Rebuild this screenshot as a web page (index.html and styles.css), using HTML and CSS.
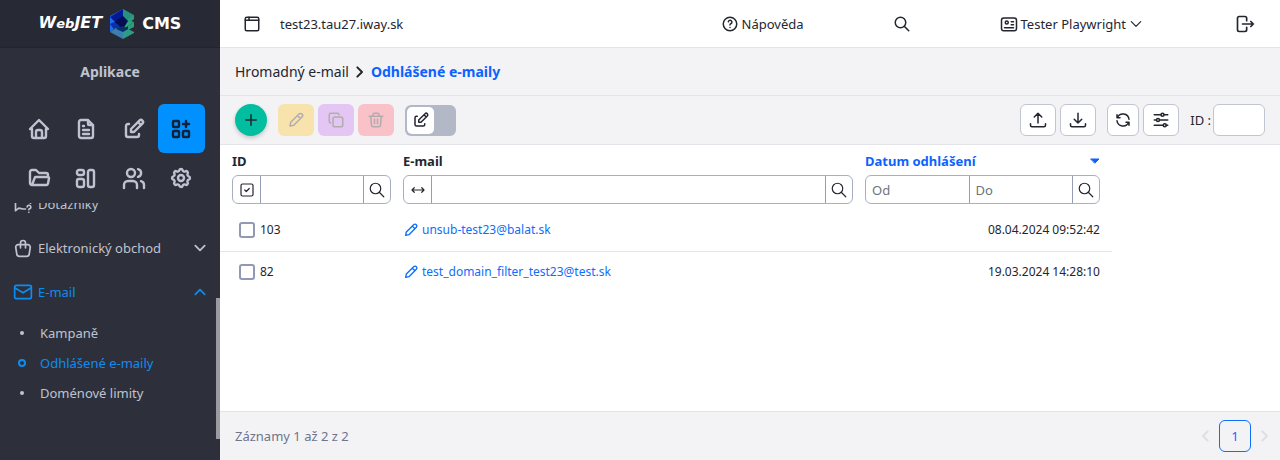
FILE: index.html
```html
<!DOCTYPE html>
<html lang="cs">
<head>
<meta charset="utf-8">
<meta name="viewport" content="width=device-width, initial-scale=1">
<title>Odhlášené e-maily</title>
<link rel="stylesheet" href="styles.css">
</head>
<body>
<svg class="sprite" aria-hidden="true">
  <symbol id="home" viewBox="0 0 24 24"><path d="M5 12H3l9-9 9 9h-2M5 12v7a2 2 0 0 0 2 2h10a2 2 0 0 0 2-2v-7M9 21v-6a2 2 0 0 1 2-2h2a2 2 0 0 1 2 2v6"/></symbol>
  <symbol id="file" viewBox="0 0 24 24"><path d="M14 3v4a1 1 0 0 0 1 1h4M17 21H7a2 2 0 0 1-2-2V5a2 2 0 0 1 2-2h7l5 5v11a2 2 0 0 1-2 2zM9 9h1M9 13h6M9 17h6"/></symbol>
  <symbol id="edit" viewBox="0 0 24 24"><path d="M7 7H6a2 2 0 0 0-2 2v9a2 2 0 0 0 2 2h9a2 2 0 0 0 2-2v-1M20.4 6.6a2.1 2.1 0 0 0-3-3L9 12v3h3zM16 5l3 3"/></symbol>
  <symbol id="apps" viewBox="0 0 24 24"><rect x="4" y="4" width="6" height="6" rx="1"/><rect x="4" y="14" width="6" height="6" rx="1"/><rect x="14" y="14" width="6" height="6" rx="1"/><path d="M14 7h6M17 4v6"/></symbol>
  <symbol id="folder" viewBox="0 0 24 24"><path d="m5 19 2.8-7.4a1 1 0 0 1 .9-.6H21a1 1 0 0 1 1 1.2l-1 5.200a2 2 0 0 1-2 1.600zM5 19a2 2 0 0 1-2-2V6a2 2 0 0 1 2-2h4l3 3h7a2 2 0 0 1 2 2v2"/></symbol>
  <symbol id="layout" viewBox="0 0 24 24"><rect x="3" y="4" width="7" height="5" rx="2"/><rect x="3" y="13" width="7" height="8" rx="2"/><rect x="14" y="4" width="6" height="17" rx="2"/></symbol>
  <symbol id="users" viewBox="0 0 24 24"><circle cx="9" cy="7" r="4"/><path d="M2 22v-3a4 4 0 0 1 4-4h5a4 4 0 0 1 4 4v3M16 3.100a4 4 0 0 1 0 7.800M22 22v-3a4 4 0 0 0-3-3.900"/></symbol>
  <symbol id="gear" viewBox="0 0 24 24"><path d="M10.3 4.3c.4-1.7 2.9-1.7 3.4 0a1.7 1.7 0 0 0 2.5 1.1c1.6-1 3.4.8 2.4 2.4a1.7 1.7 0 0 0 1.1 2.5c1.7.4 1.7 2.9 0 3.4a1.7 1.7 0 0 0-1.1 2.5c1 1.6-.8 3.4-2.4 2.4a1.7 1.7 0 0 0-2.5 1.1c-.4 1.7-2.9 1.7-3.4 0a1.7 1.7 0 0 0-2.5-1.100c-1.600 1-3.400-.8-2.400-2.400a1.700 1.700 0 0 0-1.100-2.500c-1.700-.4-1.700-2.900 0-3.400a1.700 1.700 0 0 0 1.100-2.500c-1-1.600.8-3.400 2.400-2.400a1.700 1.700 0 0 0 2.500-1.100z"/><circle cx="12" cy="12" r="3"/></symbol>
  <symbol id="survey" viewBox="0 0 24 24"><path d="M3 20V7a3 3 0 0 1 3-3h12a3 3 0 0 1 3 3v4M3 20l4-3 5 1h3M19 22v.01M17 15.500a2.200 2.200 0 1 1 3.500 2q-1.500.6-1.500 1.500"/></symbol>
  <symbol id="bag" viewBox="0 0 24 24"><path d="M6.300 8h11.400a3 3 0 0 1 3 3.400l-1.300 8.100a3 3 0 0 1-3 2.500H7.600a3 3 0 0 1-3-2.500L3.300 11.400a3 3 0 0 1 3-3.400zM9 12V6a3 3 0 0 1 6 0v6"/></symbol>
  <symbol id="mail" viewBox="0 0 24 24"><rect x="2" y="4" width="20" height="16" rx="2"/><path d="m2 7 10 6 10-6"/></symbol>
  <symbol id="down" viewBox="0 0 24 24"><path d="m4 8 8 8 8-8"/></symbol>
  <symbol id="up" viewBox="0 0 24 24"><path d="m4 16 8-8 8 8"/></symbol>
  <symbol id="left" viewBox="0 0 24 24"><path d="m16 5-7 7 7 7"/></symbol>
  <symbol id="right" viewBox="0 0 24 24"><path d="m8 5 7 7-7 7"/></symbol>
  <symbol id="window" viewBox="0 0 24 24"><rect x="3" y="3" width="18" height="18" rx="2"/><path d="M3 7h18M8 3v4"/></symbol>
  <symbol id="help" viewBox="0 0 24 24"><circle cx="12" cy="12" r="9"/><path d="M12 16.500v.01M12 13.200a1.500 1.500 0 0 1 1-1.500 2.400 2.400 0 1 0-3.200-2.700"/></symbol>
  <symbol id="search" viewBox="0 0 24 24"><circle cx="10" cy="10" r="7"/><path d="m21 21-6-6"/></symbol>
  <symbol id="card" viewBox="0 0 24 24"><rect x="2" y="4" width="20" height="17" rx="3"/><circle cx="9" cy="10" r="2"/><path d="M15 9h3M15 13h3M6 17h12"/></symbol>
  <symbol id="logout" viewBox="0 0 24 24"><path d="M14 8V5a2 2 0 0 0-2-2H5a2 2 0 0 0-2 2v14a2 2 0 0 0 2 2h7a2 2 0 0 0 2-2v-3M9 12h13l-3-3M19 15l3-3"/></symbol>
  <symbol id="plus" viewBox="0 0 24 24"><path d="M12 5v14M5 12h14"/></symbol>
  <symbol id="pencil" viewBox="0 0 24 24"><path d="m4 20 1-5L16 4a2.500 2.500 0 0 1 4 4L9 19zM14 6l4 4"/></symbol>
  <symbol id="copy" viewBox="0 0 24 24"><rect x="8" y="8" width="13" height="13" rx="2.500"/><path d="M16 5V5a2 2 0 0 0-2-2H5a2 2 0 0 0-2 2v9a2 2 0 0 0 2 2"/></symbol>
  <symbol id="trash" viewBox="0 0 24 24"><path d="M3 7h18M10 11v6M14 11v6M5 7l1 12a2 2 0 0 0 2 2h8a2 2 0 0 0 2-2l1-12M8 7V5a2 2 0 0 1 2-2h4a2 2 0 0 1 2 2v2"/></symbol>
  <symbol id="upload" viewBox="0 0 24 24"><path d="M2 17v2a2 2 0 0 0 2 2h16a2 2 0 0 0 2-2v-2M7 8l5-5 5 5M12 3v13"/></symbol>
  <symbol id="download" viewBox="0 0 24 24"><path d="M2 17v2a2 2 0 0 0 2 2h16a2 2 0 0 0 2-2v-2M7 11l5 5 5-5M12 3v13"/></symbol>
  <symbol id="refresh" viewBox="0 0 24 24"><path d="M20 11A8.100 8.100 0 0 0 4.500 9M4 5v4h4M4 13a8.100 8.100 0 0 0 15.500 2m.5 4v-4h-4"/></symbol>
  <symbol id="sliders" viewBox="0 0 24 24"><circle cx="14" cy="5" r="2"/><circle cx="8" cy="12" r="2"/><circle cx="17" cy="19" r="2"/><path d="M3 5h9M16 5h5M3 12h3M10 12h11M3 19h12M19 19h2"/></symbol>
  <symbol id="checkbox" viewBox="0 0 24 24"><rect x="4" y="4" width="16" height="16" rx="2"/><path d="m9 12 2 2 4-4"/></symbol>
  <symbol id="arrows" viewBox="0 0 24 24"><path d="M4 12h16M7 9l-3 3 3 3M17 9l3 3-3 3"/></symbol>
</svg>
<div class="app">
  <aside class="sidebar">
    <a class="brand" href="#" aria-label="WebJET CMS">
      <span class="brand-web">W<small>eb</small>JET</span>
      <svg class="brand-mark" viewBox="0 0 26 32" aria-hidden="true">
        <path fill="#1f6df0" d="M1 8 14 1v13L1 24z"/>
        <path fill="#041a94" d="m1 9 13-8v13L5 13z"/>
        <path fill="#25917e" d="m14 1 11 6v4l-6 4-5-4z"/>
        <path fill="#2aa878" d="m25 14-6 4-5 3v-7l5-2 6 2z"/>
        <path fill="#2f9a80" d="m25 7-6 4v4l6-4z"/>
        <path fill="#2f9a80" d="m25 14-6 4v4l6-3z"/>
        <path fill="#030f52" d="m5 14 9-6 5 5-5 8z"/>
        <path fill="#0a2fa8" d="m1 16 4-2 9 7-7 3z"/>
        <path fill="#3a7fae" d="m1 24 6-4 7 3v8z"/>
        <path fill="#2b9d86" d="m14 23 5-2 6 3v1l-11 6z"/>
        <path fill="#08306b" d="m7 21 7-3 5 3-5 3z"/>
      </svg>
      <span class="brand-cms">CMS</span>
    </a>
    <h2 class="side-title">Aplikace</h2>
    <nav class="modules" aria-label="Sekce">
      <a href="#" aria-label="Domů"><svg><use href="#home"/></svg></a>
      <a href="#" aria-label="Stránky"><svg><use href="#file"/></svg></a>
      <a href="#" aria-label="Editace"><svg><use href="#edit"/></svg></a>
      <a class="active" href="#" aria-label="Aplikace"><svg><use href="#apps"/></svg></a>
      <a href="#" aria-label="Soubory"><svg><use href="#folder"/></svg></a>
      <a href="#" aria-label="Šablony"><svg><use href="#layout"/></svg></a>
      <a href="#" aria-label="Uživatelé"><svg><use href="#users"/></svg></a>
      <a href="#" aria-label="Nastavení"><svg><use href="#gear"/></svg></a>
    </nav>
    <nav class="menu" aria-label="Menu">
      <ul class="menu-list">
        <li><a href="#"><svg><use href="#survey"/></svg><span>Dotazníky</span></a></li>
        <li><a href="#"><svg><use href="#bag"/></svg><span>Elektronický obchod</span><svg class="chev"><use href="#down"/></svg></a></li>
        <li><a class="current" href="#"><svg><use href="#mail"/></svg><span>E-mail</span><svg class="chev"><use href="#up"/></svg></a>
          <ul class="submenu">
            <li><a href="#">Kampaně</a></li>
            <li><a class="current" href="#">Odhlášené e-maily</a></li>
            <li><a href="#">Doménové limity</a></li>
          </ul>
        </li>
      </ul>
      <span class="scroll-thumb"></span>
    </nav>
  </aside>
  <div class="page">
    <header class="topbar">
      <svg class="icon"><use href="#window"/></svg>
      <span class="domain">test23.tau27.iway.sk</span>
      <a class="top-link" href="#"><svg class="icon"><use href="#help"/></svg>Nápověda</a>
      <button class="plain" aria-label="Hledat"><svg class="icon"><use href="#search"/></svg></button>
      <button class="plain top-link"><svg class="icon"><use href="#card"/></svg>Tester Playwright<svg class="icon caret"><use href="#down"/></svg></button>
      <a class="top-link" href="#" aria-label="Odhlásit"><svg class="icon large"><use href="#logout"/></svg></a>
    </header>
    <nav class="crumbs" aria-label="Navigace">
      <a href="#">Hromadný e-mail</a><svg class="icon"><use href="#right"/></svg><a class="here" href="#">Odhlášené e-maily</a>
    </nav>
    <div class="toolbar">
      <button class="add" aria-label="Přidat"><svg class="icon"><use href="#plus"/></svg></button>
      <div class="group">
        <button class="tool yellow" disabled aria-label="Upravit"><svg class="icon"><use href="#pencil"/></svg></button>
        <button class="tool purple" disabled aria-label="Duplikovat"><svg class="icon"><use href="#copy"/></svg></button>
        <button class="tool pink" disabled aria-label="Smazat"><svg class="icon"><use href="#trash"/></svg></button>
      </div>
      <button class="switch" role="switch" aria-checked="false" aria-label="Úprava buňky"><span><svg class="icon"><use href="#edit"/></svg></span></button>
      <div class="group tools-right">
        <button class="tool" aria-label="Exportovat"><svg class="icon"><use href="#upload"/></svg></button>
        <button class="tool" aria-label="Importovat"><svg class="icon"><use href="#download"/></svg></button>
      </div>
      <div class="group">
        <button class="tool narrow" aria-label="Obnovit"><svg class="icon"><use href="#refresh"/></svg></button>
        <button class="tool" aria-label="Nastavení tabulky"><svg class="icon"><use href="#sliders"/></svg></button>
      </div>
      <label class="id-search">ID : <input type="text"></label>
    </div>
    <main class="content">
      <table class="grid">
        <colgroup><col class="col-id"><col><col class="col-date"></colgroup>
        <thead>
          <tr><th scope="col">ID</th><th scope="col">E-mail</th><th scope="col" class="sorted"><div>Datum odhlášení<svg class="sort" viewBox="0 0 10 6"><path d="M1 1h8L5 5z"/></svg></div></th></tr>
          <tr class="filters">
            <td><div class="field"><button aria-label="Vybrat vše"><svg class="icon"><use href="#checkbox"/></svg></button><input type="text" aria-label="Filtr ID"><button aria-label="Hledat ID"><svg class="icon"><use href="#search"/></svg></button></div></td>
            <td><div class="field"><button aria-label="Obsahuje"><svg class="icon"><use href="#arrows"/></svg></button><input type="text" aria-label="Filtr E-mail"><button aria-label="Hledat e-mail"><svg class="icon"><use href="#search"/></svg></button></div></td>
            <td><div class="field"><input type="text" placeholder="Od" aria-label="Datum od"><input type="text" placeholder="Do" aria-label="Datum do"><button aria-label="Hledat datum"><svg class="icon"><use href="#search"/></svg></button></div></td>
          </tr>
        </thead>
        <tbody>
          <tr><td><label class="pick"><input type="checkbox">103</label></td><td><a class="mail" href="#"><svg class="icon"><use href="#pencil"/></svg>unsub-test23@balat.sk</a></td><td class="date">08.04.2024 09:52:42</td></tr>
          <tr><td><label class="pick"><input type="checkbox">82</label></td><td><a class="mail" href="#"><svg class="icon"><use href="#pencil"/></svg>test_domain_filter_test23@test.sk</a></td><td class="date">19.03.2024 14:28:10</td></tr>
        </tbody>
      </table>
    </main>
    <footer class="footer">
      <span>Záznamy 1 až 2 z 2</span>
      <nav class="pager" aria-label="Stránkování">
        <button class="plain" disabled aria-label="Předchozí"><svg class="icon"><use href="#left"/></svg></button>
        <button class="num">1</button>
        <button class="plain" disabled aria-label="Další"><svg class="icon"><use href="#right"/></svg></button>
      </nav>
    </footer>
  </div>
</div>
</body>
</html>
```
FILE: styles.css
```css
* { box-sizing: border-box; }
body {
  margin: 0;
  font: 13px/20px "Noto Sans", "Open Sans", sans-serif;
  color: #24262f;
  background: #fff;
}
a { color: inherit; text-decoration: none; }
button, input { font: inherit; color: inherit; margin: 0; }
button { padding: 0; cursor: pointer; }
ul { list-style: none; margin: 0; padding: 0; }
svg { fill: none; stroke: currentColor; stroke-width: 2; stroke-linecap: round; stroke-linejoin: round; flex: none; }
.sprite { position: absolute; width: 0; height: 0; }
.icon { width: 18px; height: 18px; }
.icon.large { width: 20px; height: 20px; }
.app { display: flex; min-height: 100vh; }

.sidebar { width: 220px; flex: none; background: #2d303b; color: #bfc3d1; display: flex; flex-direction: column; }
.brand {
  display: flex; align-items: center; justify-content: center; gap: 7px;
  height: 48px; background: #272a34; border-bottom: 1px solid #23252e;
  color: #fff; font: bold 16px/20px "DejaVu Sans", sans-serif;
}
.brand-web { font-style: italic; }
.brand-web small { font-size: 13px; }
.brand-mark { width: 26px; height: 32px; stroke: none; }
.side-title { margin: 0; padding: 14px 0 22px; font-size: 14px; line-height: 20px; text-align: center; }
.modules { display: grid; grid-template-columns: repeat(4, 1fr); padding: 0 15px; }
.modules a { display: grid; place-items: center; height: 49px; border-radius: 6px; }
.modules svg { width: 24px; height: 24px; stroke-width: 2.4; }
.modules .active { background: #0090ff; color: #10213b; }
.menu { position: relative; height: 237px; margin-top: 1px; overflow: hidden; }
.menu-list { margin-top: -21px; }
.menu-list > li > a { display: flex; align-items: center; gap: 5px; height: 44px; padding: 0 13px; }
.menu-list > li > a > svg { width: 20px; height: 20px; }
.menu-list > li > a > .chev { width: 14px; height: 14px; margin-left: auto; stroke-width: 3; }
.menu .current { color: #0d8cf0; }
.submenu { padding-top: 4px; }
.submenu a { display: flex; align-items: center; height: 30px; padding-left: 20px; gap: 16px; }
.submenu a::before { content: ""; box-sizing: border-box; width: 4px; height: 4px; border-radius: 50%; background: currentColor; }
.submenu .current { padding-left: 18px; gap: 14px; }
.submenu .current::before { width: 8px; height: 8px; border: 2px solid; background: none; }
.scroll-thumb { position: absolute; right: 0; top: 95px; bottom: 1px; width: 4px; background: #9a9ba0; }

.page { flex: 1; min-width: 0; display: flex; flex-direction: column; }
.topbar { display: flex; align-items: center; height: 48px; gap: 89px; padding: 0 25px 0 23px; border-bottom: 1px solid #e5e5e8; }
.topbar .domain { margin: 0 auto 0 -70px; }
.top-link { display: flex; align-items: center; gap: 3px; }
.plain { display: flex; align-items: center; border: 0; background: none; }
.plain.top-link { margin-right: 3px; }
.icon.caret { width: 14px; height: 14px; }
.crumbs { display: flex; align-items: center; gap: 3px; height: 48px; padding: 0 15px; background: #f3f3f6; border-bottom: 1px solid #e3e4e9; font-size: 14px; }
.crumbs .icon { width: 16px; height: 16px; stroke-width: 3; }
.crumbs .here { color: #0d62ff; font-weight: bold; }
.toolbar { display: flex; align-items: center; gap: 11px; height: 49px; padding: 0 15px; background: #f3f3f6; border-bottom: 1px solid #e3e4e9; }
.group { display: flex; gap: 4px; }
.add { display: grid; place-items: center; width: 32px; height: 32px; border: 0; border-radius: 50%; background: #00be9f; box-shadow: 0 2px 4px #0003; }
.tool { display: grid; place-items: center; width: 36px; height: 32px; border: 1px solid #c1c4d3; border-radius: 6px; background: #fff; }
.narrow { width: 32px; }
.tool:disabled { border: 0; color: #b3acae; }
.yellow { background: #f8e3ac; }
.purple { background: #e3c6f3; }
.pink { background: #f8c2c8; }
.switch { width: 51px; height: 31px; padding: 2px; border: 0; border-radius: 6px; background: #b3b8c7; }
.switch span { display: grid; place-items: center; width: 27px; height: 27px; border-radius: 5px; background: #fff; }
.tools-right { margin-left: auto; }
.id-search { display: flex; align-items: center; gap: 2px; }
.id-search input { width: 52px; height: 32px; border: 1px solid #c1c4d3; border-radius: 6px; background: #fff; }

.content { flex: 1; }
.grid { width: calc(100% - 168px); table-layout: fixed; border-collapse: collapse; }
.col-id { width: 177px; }
.col-date { width: 253px; }
.grid th, .grid td { padding: 0 6px; text-align: left; }
.grid tr > :first-child { padding-left: 12px; }
.grid tr > :last-child { padding-right: 12px; }
.grid th { height: 30px; padding-top: 2px; }
.grid .sorted { color: #0d62ff; }
.sorted div { display: flex; align-items: center; justify-content: space-between; }
.sort { width: 10px; height: 6px; fill: currentColor; stroke-width: 1; }
.filters { height: 35px; vertical-align: top; }
.field { display: flex; height: 29px; border: 1px solid #a9afc3; border-radius: 6px; }
.field button { display: grid; place-items: center; width: 27px; flex: none; border: 0; background: none; }
.field .icon { width: 18px; height: 18px; stroke-width: 1.6; }
.field input { flex: 1; width: 0; min-width: 0; border: 0; background: none; padding: 0 6px; }
.field > * + * { border-left: 1px solid #959cb5 !important; }
.field input::placeholder { color: #6c757d; opacity: 1; }
.grid tbody { font-size: 12px; }
.grid tbody td { height: 41px; }
.grid tbody tr + tr { border-top: 1px solid #e5e6ea; }
.pick { display: flex; align-items: center; gap: 5px; padding-left: 7px; }
.pick input { appearance: none; width: 16px; height: 16px; border: 2px solid #9299b3; border-radius: 3px; background: #fff; }
.mail { display: flex; align-items: center; gap: 3px; color: #0d6efd; }
.mail .icon { width: 16px; height: 16px; }
.grid .date { text-align: right; }

.footer { display: flex; align-items: center; justify-content: space-between; height: 49px; padding: 0 7px 0 15px; background: #f3f3f6; border-top: 1px solid #e1e3ea; color: #70748a; }
.pager { display: flex; align-items: center; gap: 6px; }
.pager .plain { color: #dcdfe6; }
.pager .plain .icon { width: 16px; height: 16px; stroke-width: 3; }
.num { width: 32px; height: 32px; border: 1px solid #0d6efd; border-radius: 6px; background: none; color: #0d6efd; }
```
